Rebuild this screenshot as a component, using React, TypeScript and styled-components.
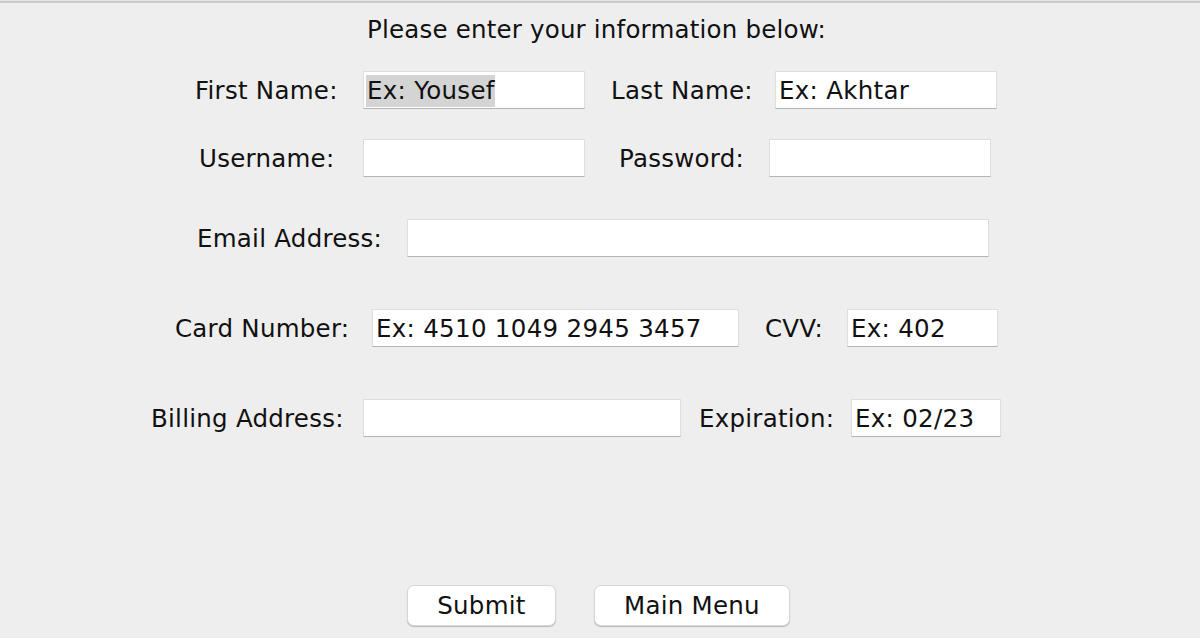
import React from "react";
import styled, { createGlobalStyle } from "styled-components";

const Global = createGlobalStyle`
  html, body { margin: 0; padding: 0; background: #eeeeee; }
  body {
    font-family: "DejaVu Sans", "Liberation Sans", sans-serif;
    color: #111111;
  }
`;

const Window = styled.div`
  width: 1200px;
  height: 638px;
  background: #eeeeee;
  display: flex;
  flex-direction: column;
  overflow: hidden;
`;

const TopRule = styled.div`
  height: 3px;
  background: linear-gradient(#e4e4e4 0 1px, #c9c9c9 1px 3px);
`;

const Heading = styled.div`
  height: 55px;
  line-height: 53px;
  text-align: center;
  font-size: 24.5px;
  letter-spacing: 0.2px;
  padding-right: 7px;
`;

const Row = styled.div<{ $top: number; $left: number }>`
  display: flex;
  align-items: center;
  height: 38px;
  margin-top: ${(p) => p.$top}px;
  padding-left: ${(p) => p.$left}px;
`;

const Label = styled.div<{ $w: number; $gap: number }>`
  box-sizing: border-box;
  width: ${(p) => p.$w}px;
  margin-left: ${(p) => p.$gap}px;
  padding-top: 2px;
  font-size: 24.5px;
  letter-spacing: 0.25px;
  line-height: 38px;
  white-space: nowrap;
`;

const Field = styled.div<{ $w: number }>`
  box-sizing: border-box;
  width: ${(p) => p.$w}px;
  height: 38px;
  background: #ffffff;
  border: 1px solid #dedede;
  border-bottom: 1px solid #b4b4b4;
  padding: 3px 3px 1px 2px;
  display: flex;
  align-items: center;
  font-size: 24.5px;
  letter-spacing: 0.3px;
  white-space: nowrap;
  overflow: hidden;
`;

const Value = styled.span<{ $selected?: boolean }>`
  background: ${(p) => (p.$selected ? "#d4d4d4" : "transparent")};
  line-height: 32px;
  padding-left: 1px;
`;

const ButtonRow = styled.div`
  display: flex;
  gap: 38px;
  margin-top: 148px;
  padding-left: 407px;
`;

const Button = styled.button<{ $w: number }>`
  box-sizing: border-box;
  width: ${(p) => p.$w}px;
  height: 41px;
  background: #ffffff;
  border: 1px solid #d6d6d6;
  border-radius: 7px;
  box-shadow: 0 1px 1px rgba(0, 0, 0, 0.22);
  font-family: "DejaVu Sans", "Liberation Sans", sans-serif;
  font-size: 24.5px;
  letter-spacing: 0.25px;
  color: #111111;
  padding: 0 0 1px;
  cursor: pointer;
`;

type Cell = {
  label: string;
  labelW: number;
  gap: number;
  fieldW: number;
  value?: string;
  selected?: boolean;
};

type RowData = { top: number; left: number; cells: Cell[] };

const rows: RowData[] = [
  {
    top: 13,
    left: 195,
    cells: [
      { label: "First Name:", labelW: 168, gap: 0, fieldW: 222, value: "Ex: Yousef", selected: true },
      { label: "Last Name:", labelW: 164, gap: 26, fieldW: 222, value: "Ex: Akhtar" },
    ],
  },
  {
    top: 30,
    left: 199,
    cells: [
      { label: "Username:", labelW: 164, gap: 0, fieldW: 222 },
      { label: "Password:", labelW: 150, gap: 34, fieldW: 222 },
    ],
  },
  {
    top: 42,
    left: 197,
    cells: [{ label: "Email Address:", labelW: 210, gap: 0, fieldW: 582 }],
  },
  {
    top: 52,
    left: 175,
    cells: [
      { label: "Card Number:", labelW: 197, gap: 0, fieldW: 367, value: "Ex: 4510 1049 2945 3457" },
      { label: "CVV:", labelW: 82, gap: 26, fieldW: 151, value: "Ex: 402" },
    ],
  },
  {
    top: 52,
    left: 151,
    cells: [
      { label: "Billing Address:", labelW: 212, gap: 0, fieldW: 318 },
      { label: "Expiration:", labelW: 152, gap: 18, fieldW: 150, value: "Ex: 02/23" },
    ],
  },
];

export default function App() {
  return (
    <>
      <Global />
      <Window>
        <TopRule />
        <Heading>Please enter your information below:</Heading>
        {rows.map((r, i) => (
          <Row key={i} $top={r.top} $left={r.left}>
            {r.cells.map((c) => (
              <React.Fragment key={c.label}>
                <Label $w={c.labelW} $gap={c.gap}>
                  {c.label}
                </Label>
                <Field $w={c.fieldW}>
                  {c.value && <Value $selected={c.selected}>{c.value}</Value>}
                </Field>
              </React.Fragment>
            ))}
          </Row>
        ))}
        <ButtonRow>
          <Button $w={149}>Submit</Button>
          <Button $w={196}>Main Menu</Button>
        </ButtonRow>
      </Window>
    </>
  );
}
